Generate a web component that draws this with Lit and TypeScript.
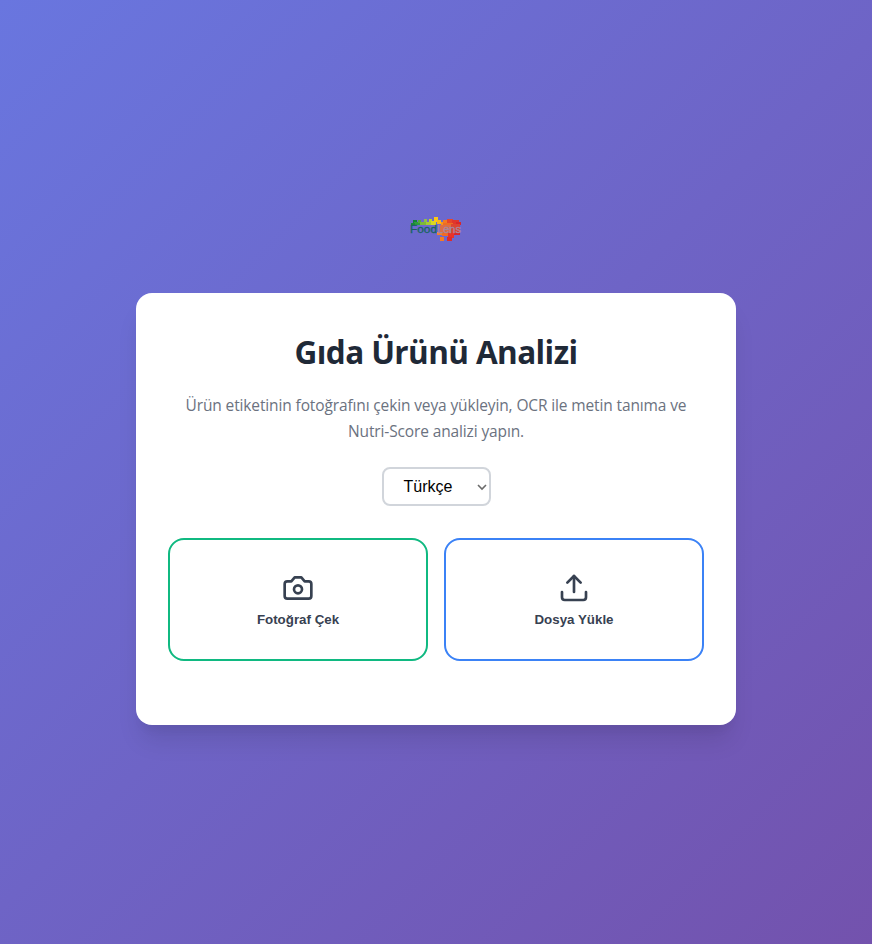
import { LitElement, html, css, svg } from "lit";
import { customElement } from "lit/decorators.js";

// x, y, width, height, colour
const BLOCKS: [number, number, number, number, string][] = [
  [7, 7, 4, 3, "#15803d"], [8, 9, 6, 3, "#2f9e3b"], [5, 10, 4, 2, "#1b8a3a"],
  [12, 7, 3, 3, "#57ab3a"], [14, 9, 6, 3, "#7cb93a"],
  [18, 6, 3, 3, "#8fbd4a"], [20, 9, 5, 3, "#a6cc33"], [23, 6, 3, 3, "#c3d51f"],
  [25, 8, 5, 4, "#d8d824"], [28, 4, 4, 5, "#fcc816"], [31, 7, 4, 4, "#f9b81a"],
  [35, 9, 4, 3, "#f7941d"], [37, 7, 5, 3, "#f37a22"], [41, 6, 6, 4, "#e8452a"],
  [46, 7, 7, 4, "#e0362c"], [50, 9, 5, 3, "#d8262c"], [37, 10, 10, 2, "#ee6c24"],
  [45, 11, 9, 9, "#dd4432"], [34, 12, 11, 8, "#d96f48"],
  [31, 19, 6, 3, "#f58220"], [36, 20, 7, 3, "#f26a24"], [42, 20, 6, 5, "#e8332a"],
  [48, 20, 6, 2, "#d8262c"], [34, 24, 4, 4, "#f47c24"], [41, 24, 5, 4, "#e02a2a"],
];

@customElement("app-root")
export class AppRoot extends LitElement {
  static styles = css`
    :host {
      display: flex;
      flex-direction: column;
      align-items: center;
      box-sizing: border-box;
      height: 944px;
      padding-top: 213px;
      background: linear-gradient(135deg, #6976df 0%, #7352ad 100%);
      font-family: "Open Sans", "Noto Sans", sans-serif;
    }
    .logo { display: block; width: 60px; height: 32px; margin-bottom: 48px; }
    .word { font: 11px "Liberation Sans", Arial, sans-serif; stroke-width: 0.3px; }
    .food { fill: #17655f; stroke: #17655f; }
    .lens { fill: #a886a0; stroke: #a886a0; }
    .card {
      box-sizing: border-box;
      width: 600px;
      height: 432px;
      padding: 32px;
      border-radius: 16px;
      background: #fff;
      box-shadow: 0 20px 25px -5px rgba(0, 0, 0, 0.1), 0 10px 10px -5px rgba(0, 0, 0, 0.04);
      display: flex;
      flex-direction: column;
      align-items: center;
    }
    h1 {
      margin: 0 0 15px;
      padding-top: 1px;
      font-size: 31.5px;
      letter-spacing: -0.6px;
      line-height: 51px;
      font-weight: 700;
      color: #1f2937;
      white-space: nowrap;
    }
    .intro {
      margin: 0 0 23px;
      font-size: 15.5px;
      letter-spacing: -0.13px;
      line-height: 26px;
      color: #6b7280;
      text-align: center;
      white-space: nowrap;
    }
    .lang {
      box-sizing: border-box;
      width: 109px;
      height: 39px;
      margin-bottom: 32px;
      padding: 0 2px 0 20px;
      border: 2px solid #d1d5db;
      border-radius: 8px;
      background: #fff;
      color: #000;
      font: 16px "Liberation Sans", Arial, sans-serif;
      display: flex;
      align-items: center;
      justify-content: space-between;
    }
    .lang svg { display: block; }
    .actions { display: grid; grid-template-columns: 1fr 1fr; gap: 16px; width: 100%; }
    button {
      box-sizing: border-box;
      height: 123px;
      padding: 32px;
      border: 2px solid;
      border-radius: 16px;
      background: #fff;
      display: flex;
      flex-direction: column;
      align-items: center;
      gap: 8px;
      font: 600 13.333px/15px "Liberation Sans", Arial, sans-serif;
    }
    .photo { border-color: #10b981; }
    .file { border-color: #3b82f6; }
    button svg { display: block; }
    button svg, button span { color: #374151; }
  `;

  private icon(shape: unknown) {
    return html`<svg width="32" height="32" viewBox="0 0 24 24" fill="none" stroke="currentColor"
      stroke-width="2" stroke-linecap="round" stroke-linejoin="round">${shape}</svg>`;
  }

  render() {
    return html`
      <svg class="logo" viewBox="0 0 60 32">
        ${BLOCKS.map(([x, y, w, h, c]) => svg`<rect x=${x} y=${y} width=${w} height=${h} fill=${c} />`)}
        <text class="word food" x="4" y="20" textLength="27" lengthAdjust="spacingAndGlyphs">Food</text>
        <text class="word lens" x="31" y="20" textLength="24" lengthAdjust="spacingAndGlyphs">Lens</text>
      </svg>
      <main class="card">
        <h1>Gıda Ürünü Analizi</h1>
        <p class="intro">
          Ürün etiketinin fotoğrafını çekin veya yükleyin, OCR ile metin tanıma ve<br />
          Nutri-Score analizi yapın.
        </p>
        <div class="lang" role="combobox" tabindex="0">
          <span>Türkçe</span>
          <svg width="12" height="8" viewBox="0 0 12 8" fill="none" stroke="#6b6b6b" stroke-width="1.6">
            <path d="M3 2 7 6 11 2" />
          </svg>
        </div>
        <div class="actions">
          <button class="photo">
            ${this.icon(svg`<path d="M14.5 4h-5L7 7H4a2 2 0 0 0-2 2v9a2 2 0 0 0 2 2h16a2 2 0 0 0 2-2V9a2 2 0 0 0-2-2h-3l-2.5-3z" /><circle cx="12" cy="13" r="3" />`)}
            <span>Fotoğraf Çek</span>
          </button>
          <button class="file">
            ${this.icon(svg`<path d="M21 15v4a2 2 0 0 1-2 2H5a2 2 0 0 1-2-2v-4" /><path d="m17 8-5-5-5 5" /><path d="M12 3v12" />`)}
            <span>Dosya Yükle</span>
          </button>
        </div>
      </main>
    `;
  }
}
